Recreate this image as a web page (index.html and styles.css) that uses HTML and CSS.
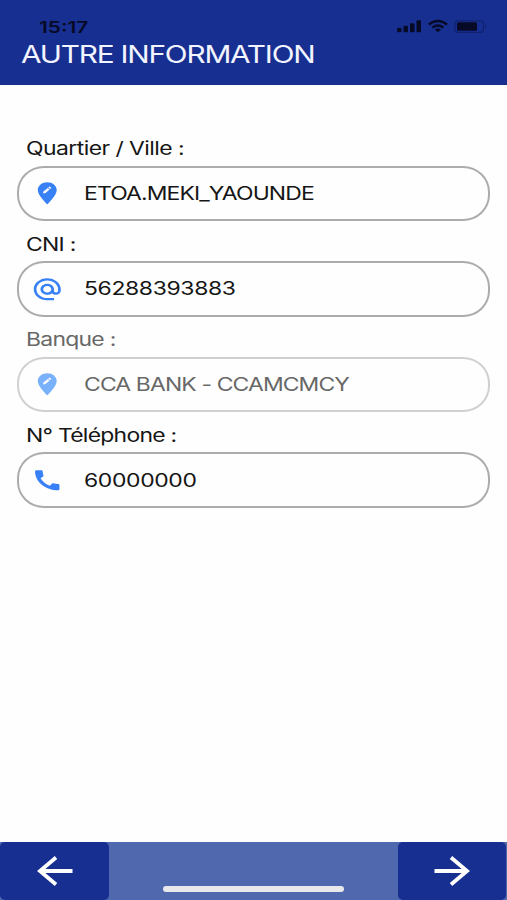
FILE: index.html
```
<!DOCTYPE html>
<html lang="fr">
<head>
    <meta charset="utf-8">
    <title>Autre information</title>
    <link rel="stylesheet" href="styles.css">
</head>
<body>
    <div class="screen">
        <header class="header">
            <div class="status-bar">
                <span class="time">15:17</span>
                <svg class="status-icons" width="91" height="16" viewBox="0 0 91 16">
                    <rect x="0" y="8.8" width="4.5" height="4.5" rx="1.5"/>
                    <rect x="6.5" y="6.8" width="4.5" height="6.5" rx="1"/>
                    <rect x="13" y="4.3" width="4.5" height="9" rx="1"/>
                    <rect x="19.5" y="1.3" width="4.5" height="12" rx="1"/>
                    <g fill="none" stroke="#060a26" stroke-width="2.4">
                        <path d="M31.7 5.6Q40.9 -1.6 50.1 5.6"/>
                        <path d="M35.3 8.6Q40.9 4.3 46.5 8.6"/>
                    </g>
                    <path d="M37.7 10.6Q40.9 8.2 44.1 10.6L40.9 13.2z"/>
                    <rect x="58" y="1.8" width="28.5" height="11.5" rx="3" fill="none" stroke="#10226f" stroke-width="1.2"/>
                    <rect x="60" y="3.3" width="20" height="8.5" rx="1.5"/>
                    <path d="M88 5.5q2.6 2 0 4z" fill="#10226f"/>
                </svg>
            </div>
            <h1 class="title">AUTRE INFORMATION</h1>
        </header>

        <main class="form">
            <div class="field">
                <div class="label"><span class="long">Quartier / Ville :</span></div>
                <div class="input">
                    <svg class="icon" viewBox="0 0 24 24" preserveAspectRatio="none"><path d="M12 2C8.14 2 5 5.14 5 9c0 5.25 7 13 7 13s7-7.75 7-13c0-3.86-3.14-7-7-7zm-1.56 10H9v-1.44l3.35-3.34 1.43 1.43L10.44 12zm4.45-4.45l-.7.7-1.44-1.44.7-.7c.15-.15.39-.15.54 0l.9.9c.15.15.15.39 0 .54z"/></svg>
                    <span class="value">ETOA.MEKI_YAOUNDE</span>
                </div>
            </div>
            <div class="field">
                <div class="label"><span>CNI :</span></div>
                <div class="input">
                    <svg class="icon" viewBox="0 0 24 24" preserveAspectRatio="none"><path d="M12 2C6.48 2 2 6.48 2 12s4.48 10 10 10h5v-2h-5c-4.34 0-8-3.66-8-8s3.66-8 8-8 8 3.66 8 8v1.43c0 .79-.71 1.57-1.5 1.57s-1.5-.78-1.5-1.57V12c0-2.76-2.24-5-5-5s-5 2.24-5 5 2.24 5 5 5c1.38 0 2.64-.56 3.54-1.47.65.89 1.77 1.47 2.96 1.47 1.97 0 3.5-1.6 3.5-3.57V12c0-5.52-4.48-10-10-10zm0 13c-1.66 0-3-1.34-3-3s1.34-3 3-3 3 1.34 3 3-1.34 3-3 3z"/></svg>
                    <span class="value number">56288393883</span>
                </div>
            </div>
            <div class="field disabled">
                <div class="label"><span>Banque :</span></div>
                <div class="input">
                    <svg class="icon" viewBox="0 0 24 24" preserveAspectRatio="none"><path d="M12 2C8.14 2 5 5.14 5 9c0 5.25 7 13 7 13s7-7.75 7-13c0-3.86-3.14-7-7-7zm-1.56 10H9v-1.44l3.35-3.34 1.43 1.43L10.44 12zm4.45-4.45l-.7.7-1.44-1.44.7-.7c.15-.15.39-.15.54 0l.9.9c.15.15.15.39 0 .54z"/></svg>
                    <span class="value">CCA BANK - CCAMCMCY</span>
                </div>
            </div>
            <div class="field">
                <div class="label"><span>N° Téléphone :</span></div>
                <div class="input">
                    <svg class="icon" viewBox="0 0 24 24" preserveAspectRatio="none"><path d="M20.01 15.38c-1.23 0-2.42-.2-3.53-.56-.35-.12-.74-.03-1.01.24l-1.57 1.97c-2.83-1.35-5.48-3.9-6.89-6.83l1.95-1.66c.27-.28.35-.67.24-1.02-.37-1.11-.56-2.3-.56-3.53 0-.54-.45-.99-.99-.99H4.19C3.65 3 3 3.24 3 3.99 3 13.28 10.73 21 20.01 21c.71 0 .99-.63.99-1.18v-3.45c0-.54-.45-.99-.99-.99z"/></svg>
                    <span class="value number">60000000</span>
                </div>
            </div>
        </main>

        <footer class="footer">
            <button class="nav-btn" aria-label="Retour">
                <svg width="38" height="32" viewBox="0 0 38 32"><path d="M36.5 16H4M20 2.5L4 16l16 13.5"/></svg>
            </button>
            <div class="home-bar"></div>
            <button class="nav-btn next" aria-label="Suivant">
                <svg width="38" height="32" viewBox="0 0 38 32"><path d="M1.5 16H34M18 2.5L34 16 18 29.5"/></svg>
            </button>
        </footer>
    </div>
</body>
</html>
```
FILE: styles.css
```
* { box-sizing: border-box; }
body { margin: 0; font-family: Inter, "Liberation Sans", sans-serif; background: #fefefe; }
.screen { height: 900px; display: flex; flex-direction: column; overflow: hidden; }

.header { height: 85px; background: #182f92; padding: 19px 19px 0 21px; }
.status-bar { display: flex; justify-content: space-between; height: 22px; padding-left: 18px; }
.time { font-size: 16px; line-height: 16px; font-weight: 600; color: #060a26; transform: scaleX(1.3); transform-origin: left; }
.status-icons { fill: #060a26; }
.title { margin: 0; font-size: 24px; line-height: 28px; font-weight: 400; letter-spacing: -0.97px; color: #f2f4ff; white-space: nowrap; transform: scaleX(1.24); transform-origin: left; width: max-content; }

.form { flex: 1; padding: 51px 17px 0; }
.field { height: 95.6px; }
.label { height: 29.5px; padding: 0 8.5px; font-size: 18.5px; line-height: 24px; letter-spacing: -0.6px; color: #161616; white-space: nowrap; }
.label span { display: inline-block; transform: scaleX(1.24); transform-origin: left; }
.label .long { letter-spacing: -0.45px; }
.input { display: flex; align-items: center; height: 55.5px; width: 473px; padding-left: 11.5px; border: 2px solid #acacac; border-radius: 27px / 26px; }
.icon { width: 32.5px; height: 26.5px; fill: #3880f6; }
.value { margin-left: 21px; padding-bottom: 1px; font-size: 18.5px; line-height: 24px; letter-spacing: -0.71px; color: #161616; white-space: nowrap; transform: scaleX(1.24); transform-origin: left; }
.number { letter-spacing: -0.3px; }
.disabled .label, .disabled .value { color: #686868; }
.disabled .input { border-color: #d0d0d0; }
.disabled .icon { fill: #79b1fa; }

.footer { display: flex; justify-content: space-between; height: 58px; padding-right: 1px; background: #5068ad; }
.nav-btn { display: flex; align-items: center; justify-content: center; width: 109px; height: 58px; padding: 0; border: 0; border-radius: 5px; background: #182f92; }
.nav-btn.next { width: 108px; }
.nav-btn svg { fill: none; stroke: #fff; stroke-width: 3.8; }
.home-bar { align-self: flex-end; width: 181px; height: 6px; margin-bottom: 8px; border-radius: 3px; background: #e9e9ec; }
```
